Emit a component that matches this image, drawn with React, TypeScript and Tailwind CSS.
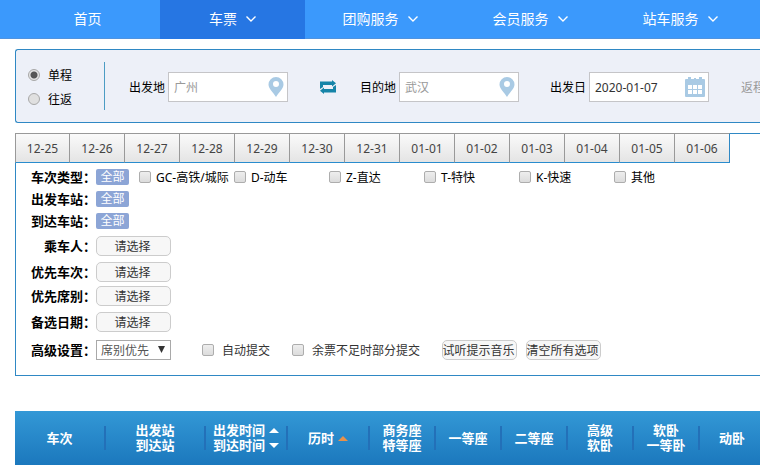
import type { ReactNode } from "react"
import clsx from "clsx"

const NAV_ITEMS = [
  { label: "首页", width: "w-[145px]", menu: false },
  { label: "车票", width: "w-[145px]", menu: true, active: true },
  { label: "团购服务", width: "w-[150px]", menu: true },
  { label: "会员服务", width: "w-[150px]", menu: true },
  { label: "站车服务", width: "w-[150px]", menu: true },
]

const DATES = [
  "12-25", "12-26", "12-27", "12-28", "12-29", "12-30", "12-31",
  "01-01", "01-02", "01-03", "01-04", "01-05", "01-06",
]

const TRAIN_TYPES = ["GC-高铁/城际", "D-动车", "Z-直达", "T-特快", "K-快速", "其他"]

const COLUMNS = [
  { lines: ["车次"], width: "w-[91px]" },
  { lines: ["出发站", "到达站"], width: "w-[100px]" },
  { lines: ["出发时间", "到达时间"], width: "w-[82px]", sort: "both" },
  { lines: ["历时"], width: "w-[82px]", sort: "up" },
  { lines: ["商务座", "特等座"], width: "w-[66px]" },
  { lines: ["一等座"], width: "w-[66px]" },
  { lines: ["二等座"], width: "w-[66px]" },
  { lines: ["高级", "软卧"], width: "w-[66px]" },
  { lines: ["软卧", "一等卧"], width: "w-[66px]" },
  { lines: ["动卧"], width: "w-[66px]" },
]

function Chevron() {
  return (
    <svg width="10" height="6" viewBox="0 0 10 6" fill="none" stroke="#fff" strokeWidth="1.4">
      <path d="M.5.5L5 5 9.500.5" />
    </svg>
  )
}

function PinIcon() {
  return (
    <svg width="16" height="20" viewBox="0 0 16 20" fill="#a9cae4">
      <path fillRule="evenodd" d="M8 0a7.5 7.5 0 0 1 7.5 7.5C15.500 11.500 11 15 8 20 5 15 .5 11.500 .5 7.500A7.500 7.500 0 0 1 8 0zm0 4a3 3 0 1 0 0 6 3 3 0 0 0 0-6z" />
    </svg>
  )
}

function CalendarIcon() {
  return (
    <svg width="20" height="20" viewBox="0 0 20 20">
      <path fill="#a9cae4" d="M1 2h2V0h3v2h3V1h2v1h3V0h3v2h2a1 1 0 0 1 1 1v16a1 1 0 0 1-1 1H1a1 1 0 0 1-1-1V3a1 1 0 0 1 1-1z" />
      <path
        fill="#fff"
        d="M3 8h4v4H3zM8 8h4v4H8zM13 8h4v4h-4zM3 13h4v4H3zM8 13h4v4H8zM13 13h4v4h-4z"
      />
    </svg>
  )
}

function SwapIcon() {
  return (
    <svg width="16" height="14" viewBox="0 0 16 14" fill="#1584a8">
      <path d="M0 9V1.500h12V0l4 3.200L12 6.500V5H3v2z" />
      <path d="M16 5v7.500H4V14L0 10.800 4 7.500V9h9V7z" />
    </svg>
  )
}

function Triangle({ down, color = "#fff" }: { down?: boolean; color?: string }) {
  return (
    <svg width="10" height="5" viewBox="0 0 10 5" fill={color}>
      <path d={down ? "M0 0h10L5 5z" : "M0 5h10L5 0z"} />
    </svg>
  )
}

type FieldProps = { id: string; label: string; value?: string; placeholder?: string; icon: ReactNode }

function Field({ id, label, value, placeholder, icon }: FieldProps) {
  return (
    <div className="flex shrink-0 items-center gap-[2px]">
      <label htmlFor={id} className="w-[37px] pt-[2px] text-black">{label}</label>
      <div className="relative">
        <input
          id={id}
          type="text"
          defaultValue={value}
          placeholder={placeholder}
          className="block h-[30px] w-[120px] border border-[#c5c5c8] bg-white pt-[2px] pr-6 pl-[5px] text-[#333] outline-none placeholder:text-[#999]"
        />
        <span className="pointer-events-none absolute top-[5px] right-1">{icon}</span>
      </div>
    </div>
  )
}

function Checkbox({ label, className }: { label: string; className?: string }) {
  return (
    <label className={clsx("flex shrink-0 items-center", className)}>
      <input
        type="checkbox"
        className="size-3 shrink-0 appearance-none rounded-[2px] border border-[#adadad] bg-linear-to-b from-[#eee] to-[#dcdcdc] checked:bg-[#3b99fc]"
      />
      <span className="pt-[2px]">{label}</span>
    </label>
  )
}

function Row({ label, htmlFor, height, children }: { label: string; htmlFor?: string; height: string; children: ReactNode }) {
  return (
    <div className={clsx("flex items-center", height)}>
      <label htmlFor={htmlFor} className="w-20 shrink-0 text-right text-[13px] font-bold text-black">{label}：</label>
      {children}
    </div>
  )
}

function AllBadge() {
  return (
    <button type="button" className="h-4 w-[33px] shrink-0 rounded-[2px] bg-[#8ca5d6] leading-4 text-white">
      全部
    </button>
  )
}

function PillButton({ id, children }: { id?: string; children: ReactNode }) {
  return (
    <button
      id={id}
      type="button"
      className="flex h-5 w-[75px] shrink-0 items-center justify-center rounded-[5px] border border-[#ccc] bg-[#f7f7f7] pt-px pr-[2px] text-[#333]"
    >
      {children}
    </button>
  )
}

export default function App() {
  return (
    <div
      lang="zh-CN"
      className="overflow-hidden bg-white font-['Noto_Sans','Noto_Sans_CJK_SC',sans-serif] text-[12px] leading-4 whitespace-nowrap text-[#333]"
    >
      {/* Main navigation */}
      <nav className="flex h-[39px] border-b border-[#4f93e0] bg-[#3b99fc] pl-[15px] text-[14px] text-white">
        {NAV_ITEMS.map((item) => (
          <a
            key={item.label}
            href="#"
            className={clsx("flex h-[39px] shrink-0 items-center justify-center gap-[9px] pb-[2px]", item.width, item.active && "bg-[#2676e3]")}
          >
            {item.label}
            {item.menu && <Chevron />}
          </a>
        ))}
      </nav>

      {/* Search form */}
      <form className="mt-[10px] ml-[15px] flex h-[74px] items-center overflow-hidden rounded-l-[3px] border border-r-0 border-[#2f88c4] bg-[#edf0f8] pl-3">
        <div className="flex w-[76px] shrink-0 flex-col gap-[6px] pt-px text-black">
          {["单程", "往返"].map((label, i) => (
            <label key={label} className="flex items-center gap-2">
              <input
                type="radio"
                name="trip"
                defaultChecked={i === 0}
                className="size-3 shrink-0 appearance-none rounded-full border border-[#a8a8a8] bg-[#e0e0e0] checked:bg-[radial-gradient(circle,#555_0,#555_3px,#e4e4e4_4px)]"
              />
              <span className="pt-[2px]">{label}</span>
            </label>
          ))}
        </div>
        <div className="mr-6 h-12 shrink-0 border-l border-[#4c9cc4]" />
        <div className="flex items-center pt-px">
          <Field id="from" label="出发地" placeholder="广州" icon={<PinIcon />} />
          <button type="button" aria-label="交换" className="mr-6 ml-8 shrink-0">
            <SwapIcon />
          </button>
          <Field id="to" label="目的地" placeholder="武汉" icon={<PinIcon />} />
          <div className="w-[31px] shrink-0" />
          <Field id="date" label="出发日" value="2020-01-07" icon={<CalendarIcon />} />
          <span className="ml-8 pt-[2px] text-[#999]">返程日</span>
        </div>
      </form>

      {/* Date tabs and filters */}
      <section className="mt-[10px] ml-[15px]">
        <div className="flex h-[30px]">
          {DATES.map((date) => (
            <button
              key={date}
              type="button"
              className="w-[55px] shrink-0 border-t border-r border-b border-[#999] border-b-[#298cce] bg-linear-to-b from-[#fafafa] to-[#e4e4e4] pt-[2px] text-[#444] first:border-l last-of-type:border-r-[#2f88c4]"
            >
              {date}
            </button>
          ))}
          <div className="flex-1 border-t border-[#2f88c4]" />
        </div>
        <div className="border-b border-l border-[#2f88c4] pt-[3px] pb-[11px]">
          <Row label="车次类型" height="h-[22px]">
            <AllBadge />
            <div className="ml-[10px] flex text-black">
              {TRAIN_TYPES.map((type) => (
                <Checkbox key={type} label={type} className="w-[95px] gap-[5px]" />
              ))}
            </div>
          </Row>
          <Row label="出发车站" height="h-[22px]">
            <AllBadge />
          </Row>
          <Row label="到达车站" height="h-[22px]">
            <AllBadge />
          </Row>
          <Row label="乘车人" htmlFor="passenger" height="h-7">
            <PillButton id="passenger">请选择</PillButton>
          </Row>
          <Row label="优先车次" htmlFor="train" height="h-6">
            <PillButton id="train">请选择</PillButton>
          </Row>
          <Row label="优先席别" htmlFor="seat" height="h-6">
            <PillButton id="seat">请选择</PillButton>
          </Row>
          <Row label="备选日期" htmlFor="dates" height="h-7">
            <PillButton id="dates">请选择</PillButton>
          </Row>
          <Row label="高级设置" htmlFor="priority" height="h-7">
            <div className="relative shrink-0">
              <select
                id="priority"
                className="block h-5 w-[75px] appearance-none border border-[#a9a9a9] bg-white pt-[2px] pl-1 text-[#555] outline-none"
              >
                <option>席别优先</option>
                <option>车次优先</option>
              </select>
              <svg className="pointer-events-none absolute top-[6px] right-[6px]" width="7" height="7" viewBox="0 0 7 7" fill="#333">
                <path d="M0 0h7L3.500 7z" />
              </svg>
            </div>
            <Checkbox label="自动提交" className="ml-[31px] w-[90px] gap-2" />
            <Checkbox label="余票不足时部分提交" className="w-[150px] gap-2" />
            <div className="flex gap-[9px]">
              <PillButton>试听提示音乐</PillButton>
              <PillButton>清空所有选项</PillButton>
            </div>
          </Row>
        </div>
      </section>

      {/* Result list header */}
      <div className="mt-[35px] ml-[15px] overflow-hidden">
        <table className="w-full table-fixed border-collapse bg-linear-to-b from-[#3398d6] to-[#1b78bd] text-[13px] leading-[15px] text-white">
          <thead>
            <tr className="h-[54px]">
              {COLUMNS.map((col) => (
                <th key={col.lines.join("")} scope="col" className={clsx("p-0 font-bold", col.width)}>
                  <div className="flex h-6 items-center justify-center gap-1 border-r-2 border-[#2370b8]">
                    <span>
                      {col.lines.map((line) => (
                        <span key={line} className="block">{line}</span>
                      ))}
                    </span>
                    {col.sort === "both" && (
                      <span className="flex flex-col gap-[10px]">
                        <Triangle />
                        <Triangle down />
                      </span>
                    )}
                    {col.sort === "up" && <Triangle color="#e8914a" />}
                  </div>
                </th>
              ))}
            </tr>
          </thead>
        </table>
      </div>
    </div>
  )
}
